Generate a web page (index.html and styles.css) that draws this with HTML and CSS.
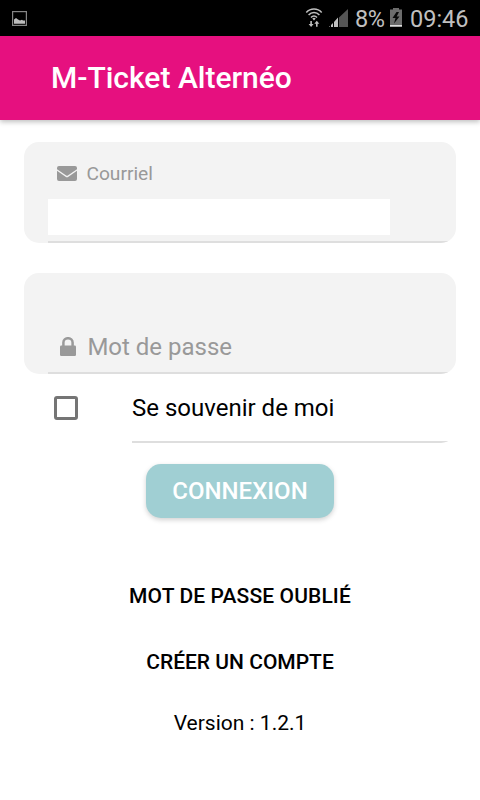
FILE: index.html
```html
<!DOCTYPE html>
<html lang="fr">
<head>
<meta charset="utf-8">
<title>M-Ticket Alternéo</title>
<link rel="stylesheet" href="styles.css">
</head>
<body>
<div class="statusbar">
  <svg class="picture" width="16" height="16" viewBox="0 0 16 16"><rect x=".6" y=".6" width="13.800" height="13.800" fill="none" stroke="#858585" stroke-width="1.200"/><path d="M2 12.800V8.600l1-.8 1-.7L6 8.600l2 1 2-.8 1 .8h2v3.200z" fill="#bdbdbd"/></svg>
  <svg class="wifi" width="18" height="20" viewBox="0 0 18 20"><g fill="none" stroke="#c0c0c0" stroke-width="1.500"><path d="M1.300 4.400C5.500-.2 12.500-.2 16.700 4.400M3.600 7c3-3.300 7.800-3.300 10.800 0M6 9.400c1.800-1.900 4.200-1.900 6 0"/></g><path d="M7.300 10.500a2.400 2.400 0 0 1 3.400 0L9 12.400zM5.300 13h1.600v3h1.700l-2.500 3-2.500-3h1.700zM11.800 12.800l2.500 3h-1.700v2.900H11v-2.900H9.300z" fill="#c0c0c0"/></svg>
  <svg class="signal" width="20" height="20" viewBox="0 0 20 20"><path d="M0 19l1-1v1zM2 19v-2l2-2v4zM5 19v-5l4-4.500V19z" fill="#c0c0c0"/><path d="M10 19V9.500L19 1v18z" fill="#555"/></svg>
  <span class="percent">8%</span>
  <svg class="battery" width="12" height="19" viewBox="0 0 12 19"><path d="M0 1.500h3V0h6v1.500h3V19H0z" fill="#6c6c6c"/><path d="M6.500 4L2.500 10h3L4 15.500 9.500 8.500H6.700L9 4z" fill="#080808"/><path d="M0 17h12v1.500H0z" fill="#ddd"/></svg>
  <span class="clock">09:46</span>
</div>
<header class="toolbar"><h1>M-Ticket Alternéo</h1></header>
<main>
  <section class="field">
    <div class="field-label">
      <svg width="20" height="15" viewBox="0 0 20 15"><path fill="#999" d="M2 0h16a2 2 0 0 1 2 2v1.200L10.800 9.600q-.8.500-1.600 0L0 3.200V2a2 2 0 0 1 2-2zM0 4.800l8.600 6q1.400 1 2.800 0L20 4.800V13a2 2 0 0 1-2 2H2a2 2 0 0 1-2-2z"/></svg>
      <span>Courriel</span>
    </div>
    <div class="field-value"></div>
    <div class="rule"></div>
  </section>
  <section class="field">
    <div class="field-placeholder">
      <svg width="16" height="20" viewBox="0 0 16 20"><path d="M3.400 10V5.500a4.600 4.300 0 0 1 9.200 0V10" fill="none" stroke="#999" stroke-width="2.500"/><rect y="8.500" width="16" height="10.500" rx="1.200" fill="#999"/></svg>
      <span>Mot de passe</span>
    </div>
    <div class="rule"></div>
  </section>
  <div class="remember">
    <span class="checkbox"></span>
    <span class="remember-text">Se souvenir de moi</span>
  </div>
  <div class="actions">
    <button class="login">CONNEXION</button>
    <a class="link forgot">MOT DE PASSE OUBLIÉ</a>
    <a class="link create">CRÉER UN COMPTE</a>
    <p class="version">Version : 1.2.1</p>
  </div>
</main>
</body>
</html>
```
FILE: styles.css
```css
* { box-sizing: border-box; }
body {
  margin: 0;
  width: 480px;
  height: 800px;
  overflow: hidden;
  background: #fff;
  color: #000;
  font-family: Roboto, "Liberation Sans", sans-serif;
}
svg { display: block; flex: none; }
.statusbar {
  display: flex;
  height: 36px;
  background: #000;
  color: #c0c0c0;
  font-size: 23.5px;
  line-height: 38px;
  white-space: nowrap;
}
.picture { margin: 11px 0 0 12px; }
.wifi { margin: 8px 0 0 277px; }
.signal { margin: 8px 0 0 6px; }
.percent { width: 29px; margin-left: 6px; letter-spacing: -.4px; }
.battery { margin: 8px 0 0 6px; }
.clock { margin-left: 8px; }
.toolbar {
  display: flex;
  align-items: center;
  height: 84px;
  padding-left: 51px;
  background: #e6107f;
  box-shadow: 0 2px 5px rgba(0, 0, 0, .25);
}
h1 {
  margin: 0;
  color: #fff;
  font-size: 30px;
  font-weight: 500;
  line-height: 40px;
}
main { padding: 22px 24px 0; }
.field {
  display: flex;
  flex-direction: column;
  height: 101px;
  margin-bottom: 30px;
  padding-left: 24px;
  overflow: hidden;
  border-radius: 15px;
  background: #f3f3f3;
}
.field + .field { margin-bottom: 0; }
.rule {
  height: 2px;
  margin-top: auto;
  background: #dedede;
}
.field-label {
  display: flex;
  align-items: center;
  gap: 9.4px;
  height: 22px;
  margin: 20px 0 15px 9px;
  color: #999;
  font-size: 19.2px;
}
.field-value {
  width: 342px;
  height: 36px;
  background: #fff;
}
.field-placeholder {
  display: flex;
  align-items: center;
  gap: 11.4px;
  height: 30px;
  margin: 59px 0 0 12px;
  color: #999;
  font-size: 24px;
}
.remember {
  display: flex;
  height: 69px;
  padding-left: 30px;
  overflow: hidden;
  border-radius: 15px;
}
.checkbox {
  width: 24px;
  height: 24px;
  margin-top: 22px;
  border: 3px solid #757575;
  border-radius: 3px;
}
.remember-text {
  flex: 1;
  margin-left: 54px;
  border-bottom: 2px solid #dedede;
  font-size: 24px;
  line-height: 68px;
}
.actions {
  display: flex;
  flex-direction: column;
  align-items: center;
}
.login {
  width: 188px;
  height: 54px;
  margin-top: 21px;
  padding: 0;
  border: 0;
  border-radius: 15px;
  background: #a0cfd3;
  box-shadow: 0 2px 5px rgba(0, 0, 0, .18);
  color: #fff;
  font: 500 24px/54px Roboto, sans-serif;
}
.link {
  font-size: 21px;
  font-weight: 500;
  line-height: 30px;
  white-space: nowrap;
}
.forgot { margin-top: 63px; letter-spacing: .12px; }
.create { margin-top: 36px; }
.version {
  margin: 31px 0 0;
  font-size: 21px;
  line-height: 30px;
}
```
